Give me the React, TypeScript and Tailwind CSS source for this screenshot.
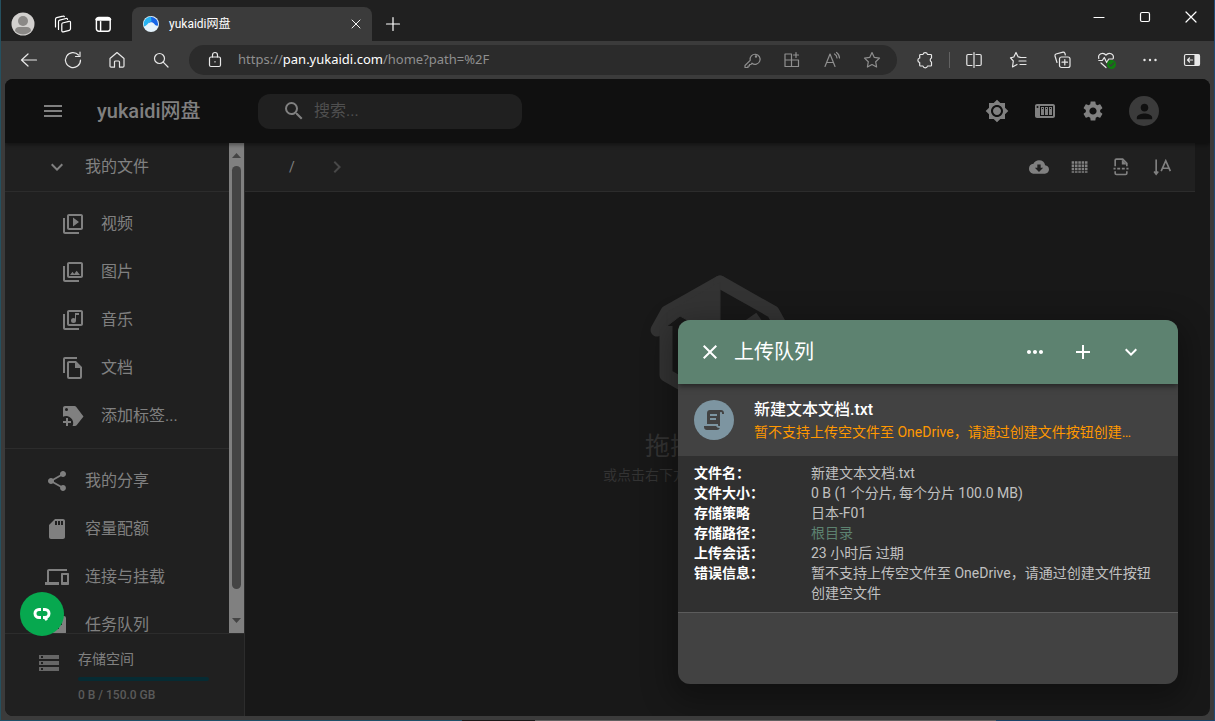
import type { ReactNode } from "react";
import {
  MdAdd,
  MdBrightness7,
  MdChevronRight,
  MdClose,
  MdCloudDownload,
  MdDevices,
  MdExpandMore,
  MdMenu,
  MdMoreHoriz,
  MdOutlineLibraryMusic,
  MdOutlinePhotoLibrary,
  MdOutlineVideoLibrary,
  MdPerson,
  MdSdStorage,
  MdSearch,
  MdSettings,
  MdShare,
  MdStorage,
} from "react-icons/md";

type IconProps = { children: ReactNode; className?: string };

// thin line icons of the browser frame
function Line({ children, className = "size-5" }: IconProps) {
  return (
    <svg
      viewBox="0 0 20 20"
      className={className}
      fill="none"
      stroke="currentColor"
      strokeWidth="1.2"
      strokeLinecap="round"
      strokeLinejoin="round"
    >
      {children}
    </svg>
  );
}

function Solid({ children, className = "size-6" }: IconProps) {
  return (
    <svg viewBox="0 0 24 24" className={className} fill="currentColor">
      {children}
    </svg>
  );
}

function TagPlusIcon() {
  return (
    <Solid>
      <path
        fillRule="evenodd"
        d="M4 2h9.500c.7 0 1.200.3 1.600.8L22.500 12.500 15.600 21.200c-.4.500-.9.800-1.600.8H11.500c.6-1 .9-2.500.5-4.500-.6-2.700-3-5-6-5.500-1.500-.2-2.900.1-4 .7V4c0-1.100.9-2 2-2zm1.500 2a1.500 1.500 0 100 3 1.500 1.500 0 000-3z"
      />
      <path d="M10 19H7v3H5v-3H2v-2h3v-3h2v3h3z" />
    </Solid>
  );
}

function FilesIcon() {
  return (
    <Solid>
      <path
        fillRule="evenodd"
        d="M16 1H4a2 2 0 00-2 2v14h2V3h12V1M8 5h7l6 6v10a2 2 0 01-2 2H8a2 2 0 01-2-2V7c0-1.100.9-2 2-2M8 7v14h11v-9h-5V7H8"
      />
    </Solid>
  );
}

function NasIcon() {
  return (
    <Solid>
      <path
        fillRule="evenodd"
        d="M4 5c-1.110 0-2 .9-2 2v10c0 1.100.89 2 2 2h16c1.100 0 2-.9 2-2V7c0-1.100-.9-2-2-2H4M4.500 7a1 1 0 010 2 1 1 0 010-2M7 7h13v10H7V7"
      />
      <path
        fillRule="evenodd"
        d="M8 8v8h3V8H8M12 8v8h3V8h-3M16 8v8h3V8h-3M9 9h1v1H9V9M13 9h1v1h-1V9M17 9h1v1h-1V9"
      />
    </Solid>
  );
}

function ScriptIcon() {
  return (
    <Solid>
      <path
        fillRule="evenodd"
        d="M17.800 20C17.400 21.200 16.300 22 15 22H5C3.300 22 2 20.700 2 19V18H14.200C14.600 19.200 15.700 20 17 20H17.800M19 2C20.700 2 22 3.300 22 5V6H20V5C20 4.400 19.600 4 19 4C18.400 4 18 4.400 18 5V18H17C16.400 18 16 17.600 16 17V16H5V5C5 3.300 6.300 2 8 2H19M8 6V8H15V6H8M8 10V12H14V10H8Z"
      />
    </Solid>
  );
}

function TitleBar() {
  return (
    <div className="flex h-[41px] shrink-0 items-end bg-[#202020]">
      <div className="flex h-full w-[131px] shrink-0 items-center gap-[18px] pt-[6px] pl-[10px] text-white">
        <button aria-label="个人资料">
          <svg viewBox="0 0 24 24" className="size-6">
            <circle cx="12" cy="12" r="11.500" fill="#d2d0ce" />
            <circle cx="12" cy="9" r="5" fill="#8a8886" />
            <path d="M4 19c0-3 2-4 4-4h8c2 0 4 1 4 4a11 11 0 01-16 0z" fill="#8a8886" />
          </svg>
        </button>
        <button aria-label="工作区">
          <Line>
            <path d="M9.500 9l6.500-1.700c.9-.2 1.500.2 1.500 1.100v6.400c0 .8-.4 1.300-1.200 1.500l-6 1.600c-.9.2-1.500-.2-1.500-1.100V10.400c0-.7.200-1.200.7-1.400z" />
            <path d="M5.500 15.500V7.700c0-.8.400-1.300 1.200-1.500L13 4.500c.8-.2 1.400.1 1.500.8M2.500 13V5.200c0-.8.400-1.300 1.200-1.500L10 2.200c.7-.2 1.200 0 1.400.5" />
          </Line>
        </button>
        <button aria-label="标签操作菜单">
          <Line className="size-6">
            <rect x="4.500" y="4.500" width="11.500" height="11.500" rx="2" />
            <path d="M5 6h10.500" strokeWidth="2.600" />
            <path d="M8 8v7.500" />
          </Line>
        </button>
      </div>
      <div className="flex h-[34px] w-[240px] items-center rounded-t-lg bg-[#3b3b3b] pr-2 pl-[11px] text-white">
        <svg viewBox="0 0 16 16" className="size-4 shrink-0">
          <circle cx="8" cy="8" r="8" fill="#e4f3fc" />
          <path d="M7.500.8a7.300 7.300 0 017.400 8.700c-1.500.6-2.600-.2-3.500-1.500C10 6 7.500 5.500 5.500 7z" fill="#1767e8" />
          <path d="M1.200 10.500A7.200 7.200 0 018 .8l.5 4.700C5.500 5.500 4.500 9.500 1.200 10.500z" fill="#27b4f3" />
        </svg>
        <span className="ml-[10px] grow text-xs">yukaidi网盘</span>
        <button aria-label="关闭标签页">
          <Line className="size-4">
            <path d="M5 5l10 10M15 5L5 15" />
          </Line>
        </button>
      </div>
      <button aria-label="新建标签页" className="mb-[7px] ml-[11px] text-white">
        <Line>
          <path d="M10 3.500v13M3.500 10h13" />
        </Line>
      </button>
      <div className="ml-auto flex h-full items-start gap-[26px] pt-[7px] pr-[13px] text-white">
        <button aria-label="最小化">
          <Line>
            <path d="M5 10.500h10" />
          </Line>
        </button>
        <button aria-label="最大化">
          <Line>
            <rect x="5.500" y="5.500" width="9" height="9" rx="1.500" />
          </Line>
        </button>
        <button aria-label="关闭">
          <Line>
            <path d="M5 5l10 10M15 5L5 15" />
          </Line>
        </button>
      </div>
    </div>
  );
}

function AddressBar() {
  return (
    <div className="flex h-[38px] shrink-0 items-center bg-[#3b3b3b] text-[#e8e8e8]">
      <div className="flex w-[188px] shrink-0 items-center gap-6 pl-[18px]">
        <button aria-label="返回">
          <Line>
            <path d="M17.500 10H2.500M9 4l-6.500 6L9 16" />
          </Line>
        </button>
        <button aria-label="刷新">
          <Line>
            <path d="M17.500 10A7.500 7.500 0 1115.500 5M17 2v4.500h-4.500" />
          </Line>
        </button>
        <button aria-label="主页">
          <Line>
            <path d="M3 8.500L10 2.500l7 6V16c0 .8-.4 1.200-1.200 1.200H12.500V12c0-.6-.4-1-1-1h-3c-.6 0-1 .4-1 1v5.200H4.200C3.400 17.200 3 16.800 3 16z" />
          </Line>
        </button>
        <button aria-label="搜索">
          <Line>
            <circle cx="8.500" cy="8.500" r="5" />
            <path d="M12.200 12.200L17 17" />
          </Line>
        </button>
      </div>
      <div className="flex h-[30px] min-w-0 grow items-center rounded-full bg-[#2b2b2b] pr-[15px] pl-4">
        <Line className="size-5 shrink-0">
          <rect x="4.500" y="7" width="11" height="9.500" rx="1.500" />
          <path d="M7.500 7V5a2.500 2.500 0 015 0v2M10 11.500v.5" />
        </Line>
        <div className="ml-[13px] grow truncate font-['Noto_Sans','Noto_Sans_CJK_SC',sans-serif] text-[13px] text-[#8f8f8f]">
          https://<span className="text-white">pan.yukaidi.com</span>/home?path=%2F
        </div>
        <div className="flex shrink-0 gap-5 text-[#8f8f8f]">
          <button aria-label="密码">
            <Line>
              <path d="M8.200 10.300L3 15.500V17.500h3V16h1.500v-1.500H9l1-1.300a5 5 0 10-1.800-2.900z" />
              <circle cx="14" cy="6.500" r=".6" />
            </Line>
          </button>
          <button aria-label="安装应用">
            <Line>
              <path d="M9.500 4H3v12.500h13.500V10H3M9.500 4v12.500M14 2.500v5M11.500 5h5" />
            </Line>
          </button>
          <button aria-label="大声朗读">
            <Line>
              <path d="M3 16.500L8 4l5 12.500M4.700 12.500h6.600M12.500 4a5 5 0 012.500 4M14.500 2.500A7 7 0 0117.500 8" />
            </Line>
          </button>
          <button aria-label="收藏">
            <Line>
              <path d="M10 2.500l2.300 4.900 5.200.7-3.800 3.700.9 5.200L10 14.500 5.400 17l.9-5.200-3.800-3.700 5.200-.7z" />
            </Line>
          </button>
        </div>
      </div>
      <div className="flex shrink-0 items-center pr-3 pl-[18px]">
        <button aria-label="扩展">
          <Line>
            <path d="M5.500 4.500H8a2.300 2.300 0 014.500 0h3.200c.5 0 .8.300.8.800V8a2.200 2.200 0 000 4v3.200c0 .5-.3.800-.8.800H12.500a2.300 2.300 0 01-4.500 0H5.500c-.5 0-.8-.3-.8-.8V12.500a2.300 2.300 0 010-4.500V5.300c0-.5.300-.8.8-.8z" />
          </Line>
        </button>
        <span className="mx-[14px] h-4 w-px bg-[#626262]" />
        <div className="flex items-center gap-6">
          <button aria-label="分屏">
            <Line>
              <path d="M8 4.500H4c-.8 0-1.200.4-1.200 1.200v8.600c0 .8.400 1.200 1.200 1.200h4M12 4.500h4c.8 0 1.200.4 1.200 1.200v8.600c0 .8-.4 1.200-1.200 1.200h-4M10 2.500v15" />
            </Line>
          </button>
          <button aria-label="收藏夹">
            <Line>
              <path d="M12 7.200L10.200 7 8 2.500 5.800 7 2.500 7.800 5.300 11 4.500 17 9 14.500M12 7.500h6M11 11h7M12 14.500h6" />
            </Line>
          </button>
          <button aria-label="集锦">
            <Line>
              <rect x="7.500" y="7" width="10.500" height="10.500" rx="2" />
              <path d="M12.800 9.500v5.500M10 12.200h5.500M5 12.500L3 6c-.2-1 .2-1.700 1-2l7-1.800c1-.2 1.500.2 1.900 1L13.300 5" />
            </Line>
          </button>
          <button aria-label="浏览器概要">
            <Line>
              <path d="M2.800 8.500C1.500 4 7 1.500 10 5c3-3.500 8.500-1 7.200 3.500M2.800 10.500h3.500l2-3 2.400 5 2-3.500h4M5 13l5 4.500" />
              <circle cx="15.500" cy="14.500" r="4.500" fill="#107c10" stroke="none" />
              <path d="M13.500 14.500l1.500 1.500 2.700-3" stroke="#3b3b3b" />
            </Line>
          </button>
          <button aria-label="设置及其他">
            <Line>
              <path d="M4.500 10h.01M10 10h.01M15.500 10h.01" strokeWidth="2.400" />
            </Line>
          </button>
          <button aria-label="侧边栏" className="ml-[-2px]">
            <Line>
              <rect x="2.500" y="4.500" width="15" height="11" rx="1.500" />
              <path d="M13 5h4v10h-4z" fill="currentColor" />
              <path d="M10.500 10H5.500M7.500 8l-2 2 2 2" />
            </Line>
          </button>
        </div>
      </div>
    </div>
  );
}

function AppHeader() {
  return (
    <header className="relative z-10 flex h-16 shrink-0 items-center bg-[#101010] pr-[51px] pl-9 text-[#808080] shadow-[0_2px_4px_rgba(0,0,0,0.4)]">
      <button aria-label="菜单">
        <MdMenu className="size-6" />
      </button>
      <h1 className="ml-8 w-[161px] text-xl font-medium">yukaidi网盘</h1>
      <label className="flex h-[35px] w-[264px] items-center rounded-xl bg-[#202020] pl-6">
        <MdSearch className="size-6" />
        <input
          aria-label="搜索"
          placeholder="搜索..."
          className="ml-2 w-44 bg-transparent text-base outline-none placeholder:text-[#4f4f4f]"
        />
      </label>
      <div className="ml-auto flex items-center gap-6">
        <button aria-label="切换主题">
          <MdBrightness7 className="size-6" />
        </button>
        <button aria-label="存储策略">
          <NasIcon />
        </button>
        <button aria-label="设置">
          <MdSettings className="size-6" />
        </button>
        <button
          aria-label="用户"
          className="flex size-[30px] items-center justify-center rounded-full bg-[#3b3b3b] text-[#101010]"
        >
          <MdPerson className="size-[23px]" />
        </button>
      </div>
    </header>
  );
}

const fileTypes = [
  { name: "视频", icon: <MdOutlineVideoLibrary className="size-6" /> },
  { name: "图片", icon: <MdOutlinePhotoLibrary className="size-6" /> },
  { name: "音乐", icon: <MdOutlineLibraryMusic className="size-6" /> },
  { name: "文档", icon: <FilesIcon /> },
  { name: "添加标签...", icon: <TagPlusIcon /> },
];

const pages = [
  { name: "我的分享", icon: <MdShare className="size-6" /> },
  { name: "容量配额", icon: <MdSdStorage className="size-6" /> },
  { name: "连接与挂载", icon: <MdDevices className="size-6" /> },
  {
    name: "任务队列",
    icon: (
      <Solid>
        <path
          fillRule="evenodd"
          d="M5 3h14a2 2 0 012 2v14a2 2 0 01-2 2H5a2 2 0 01-2-2V5c0-1.100.9-2 2-2M15 10v2h2v-2h-2M11 14v2h3v-2h-3"
        />
      </Solid>
    ),
  },
];

function Sidebar() {
  return (
    <aside className="flex w-60 shrink-0 flex-col border-r border-[#2c2c2c] bg-[#202020] text-[#808080]">
      <div className="flex min-h-0 grow">
        <nav className="min-w-0 grow overflow-hidden text-base">
          <a href="#files" className="flex h-[49px] items-center border-b border-[#2c2c2c] pl-10">
            <MdExpandMore className="size-6" />
            <span className="ml-4">我的文件</span>
          </a>
          <ul className="border-b border-[#2c2c2c] py-2">
            {fileTypes.map((item) => (
              <li key={item.name}>
                <a href="#type" className="flex h-12 items-center pl-14">
                  {item.icon}
                  <span className="ml-4">{item.name}</span>
                </a>
              </li>
            ))}
          </ul>
          <ul className="pt-2">
            {pages.map((item) => (
              <li key={item.name}>
                <a href="#page" className="flex h-12 items-center pl-10">
                  {item.icon}
                  <span className="ml-4">{item.name}</span>
                </a>
              </li>
            ))}
          </ul>
        </nav>
        <div className="flex w-[15px] shrink-0 flex-col items-center bg-[#808080] text-[#444444]">
          <svg viewBox="0 0 15 23" className="h-[23px] w-[15px]" fill="currentColor">
            <path d="M3 15h9l-4.500-5z" />
          </svg>
          <div className="w-[9px] grow rounded-full bg-[#444444]" />
          <svg viewBox="0 0 15 44" className="h-11 w-[15px]" fill="currentColor">
            <path d="M3 29h9l-4.500 5z" />
          </svg>
        </div>
      </div>
      <div className="flex h-[83px] shrink-0 border-t border-[#2c2c2c] pl-8">
        <MdStorage className="mt-[17px] size-6 text-[#666666]" />
        <div className="ml-[17px] w-[131px] pt-[15px]">
          <div className="text-sm">存储空间</div>
          <div className="mt-2 h-1 rounded-sm bg-[#062b33]" />
          <div className="mt-1 text-xs leading-5 font-medium text-[#5a5a5a]">0 B / 150.0 GB</div>
        </div>
      </div>
    </aside>
  );
}

function PathBar() {
  return (
    <div className="mr-[15px] flex h-[49px] shrink-0 items-center border-b border-[#2c2c2c] bg-[#202020] pr-[23px] pl-11 text-[#808080]">
      <button className="w-9 text-left text-sm">/</button>
      <MdChevronRight className="size-6 text-[#484848]" />
      <div className="ml-auto flex items-center gap-[21px]">
        <button aria-label="离线下载">
          <MdCloudDownload className="size-5" />
        </button>
        <button aria-label="切换视图">
          <Solid className="size-5">
            <path d="M2 5h3v3H2zm4 0h3v3H6zm4 0h3v3h-3zm4 0h3v3h-3zm4 0h3v3h-3zM2 9h3v3H2zm4 0h3v3H6zm4 0h3v3h-3zm4 0h3v3h-3zm4 0h3v3h-3zM2 13h3v3H2zm4 0h3v3H6zm4 0h3v3h-3zm4 0h3v3h-3zm4 0h3v3h-3zM2 17h3v2H2zm4 0h3v2H6zm4 0h3v2h-3zm4 0h3v2h-3zm4 0h3v2h-3z" />
          </Solid>
        </button>
        <button aria-label="分页">
          <Solid className="size-5">
            <path
              d="M5 11V4c0-1 .5-1.500 1.500-1.500H14l5 5V11M5 17v2.500c0 1 .5 1.500 1.500 1.500h11c1 0 1.500-.5 1.500-1.500V17M3 14h2.500m2 0h3.500m2 0h3.500m2 0H21"
              fill="none"
              stroke="currentColor"
              strokeWidth="2"
            />
            <path d="M13 3v6h6z" />
          </Solid>
        </button>
        <button aria-label="排序方式">
          <Solid className="size-5">
            <path
              d="M5 3v17M2.500 17.500L5 20.500l2.500-3M11 17l5.500-12.500L22 17M13 13.500h7"
              fill="none"
              stroke="currentColor"
              strokeWidth="2"
            />
          </Solid>
        </button>
      </div>
    </div>
  );
}

function DropHint() {
  return (
    <div className="flex grow flex-col items-center pt-[74px] pr-[15px] text-[#333333]">
      <svg viewBox="0 0 160 160" className="size-40" fill="none" stroke="currentColor">
        <path d="M80 16L27 46l-10 18" strokeWidth="13" strokeLinecap="round" strokeLinejoin="round" />
        <path d="M80 16l53 30 10 18" strokeWidth="13" strokeLinecap="round" strokeLinejoin="round" />
        <path d="M26 60v49l54 31 54-31V60L80 90" strokeWidth="13" strokeLinejoin="round" />
        <path d="M80 16v56L40 50 27 60V46z" fill="currentColor" />
        <path d="M80 80l40-28" strokeWidth="13" />
      </svg>
      <p className="mt-[3px] text-[25px] leading-9">拖拽文件至此</p>
      <p className="text-sm">或点击右下方“上传文件”按钮添加文件</p>
    </div>
  );
}

const details = [
  { label: "文件名：", value: "新建文本文档.txt" },
  { label: "文件大小：", value: "0 B (1 个分片, 每个分片 100.0 MB)" },
  { label: "存储策略", value: "日本-F01" },
  { label: "存储路径：", value: "根目录", link: true },
  { label: "上传会话：", value: "23 小时后 过期" },
  { label: "错误信息：", value: "暂不支持上传空文件至 OneDrive，请通过创建文件按钮创建空文件" },
];

function UploadQueue() {
  return (
    <section className="absolute right-8 bottom-8 z-20 flex h-[364px] w-[500px] flex-col overflow-hidden rounded-xl bg-[#424242] text-white shadow-[0_10px_30px_8px_rgba(0,0,0,0.3)]">
      <header className="relative flex h-16 shrink-0 items-center bg-[#5d8270] pr-[35px] pl-5 shadow-[0_2px_6px_rgba(0,0,0,0.5)]">
        <button aria-label="关闭">
          <MdClose className="size-6" />
        </button>
        <h2 className="ml-3 grow text-xl">上传队列</h2>
        <div className="flex gap-6">
          <button aria-label="更多">
            <MdMoreHoriz className="size-6" />
          </button>
          <button aria-label="添加">
            <MdAdd className="size-6" />
          </button>
          <button aria-label="收起">
            <MdExpandMore className="size-6" />
          </button>
        </div>
      </header>
      <div className="flex h-[72px] shrink-0 items-center pr-10 pl-4">
        <div className="flex size-10 shrink-0 items-center justify-center rounded-full bg-[#7d95a1] text-[#424242]">
          <ScriptIcon />
        </div>
        <div className="ml-5 min-w-0">
          <div className="truncate text-base font-medium">新建文本文档.txt</div>
          <div className="truncate text-sm text-[#ff9800]">
            暂不支持上传空文件至 OneDrive，请通过创建文件按钮创建空文件
          </div>
        </div>
      </div>
      <dl className="border-b border-[#5c5c5c] bg-[#303030] px-4 pt-[7px] pb-[9px] text-sm">
        {details.map((row) => (
          <div key={row.label} className="grid grid-cols-4">
            <dt className="font-bold">{row.label}</dt>
            <dd className="col-span-3 text-[#c1c1c1]">
              {row.link ? (
                <a href="#root" className="text-[#5d8270]">
                  {row.value}
                </a>
              ) : (
                row.value
              )}
            </dd>
          </div>
        ))}
      </dl>
    </section>
  );
}

export default function App() {
  return (
    <div className="flex h-screen flex-col overflow-hidden border-r border-l border-r-[#1f4a73] border-l-[#25505f] bg-[#3b3b3b] font-[Roboto,'Noto_Sans_CJK_SC',sans-serif]">
      <TitleBar />
      <AddressBar />
      <div className="relative mr-1 ml-1 flex min-h-0 grow flex-col overflow-hidden rounded-lg bg-[#181818]">
        <AppHeader />
        <div className="flex min-h-0 grow">
          <Sidebar />
          <main className="flex min-w-0 grow flex-col">
            <PathBar />
            <DropHint />
          </main>
        </div>
        <UploadQueue />
        <button
          aria-label="客服"
          className="absolute bottom-20 left-[15px] z-20 flex size-11 items-center justify-center rounded-full bg-[#07a84f] text-white"
        >
          <svg viewBox="0 0 20 20" className="size-5" fill="none" stroke="currentColor" strokeWidth="3">
            <path d="M9 5.500H7a4 4 0 000 8h2M11 5.500h2a4 4 0 010 8h-2M12.500 13l2.500 3" />
          </svg>
        </button>
      </div>
      <div className="flex h-[5px] shrink-0 items-end">
        <div className="h-px w-[38%] bg-[#1f5068]" />
        <div className="h-px w-[6%] bg-[#1a1a1a]" />
        <div className="h-px grow bg-[#606060]" />
        <div className="h-px w-[18%] bg-[#1a4468]" />
      </div>
    </div>
  );
}
